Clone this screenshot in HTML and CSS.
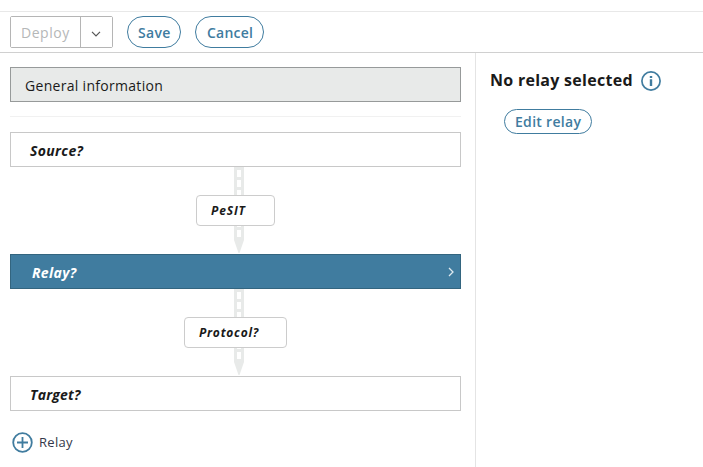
FILE: index.html
```html
<!DOCTYPE html>
<html lang="en">
<head>
<meta charset="utf-8">
<title>Flow editor</title>
<link rel="stylesheet" href="styles.css">
</head>
<body>
<header class="toolbar">
  <div class="split">
    <button class="split-main" disabled><span>Deploy</span></button>
    <button class="split-toggle" aria-label="More">
      <svg width="10" height="6" viewBox="0 0 10 6"><path d="M1 .8 5 4.8 9 .8" fill="none" stroke="#555" stroke-width="1.2"/></svg>
    </button>
  </div>
  <button class="pill save"><span>Save</span></button>
  <button class="pill cancel"><span>Cancel</span></button>
</header>
<main class="content">
  <section class="flow">
    <div class="bar general"><span>General information</span></div>
    <hr class="divider">
    <div class="bar step"><span>Source?</span></div>
    <div class="link">
      <svg class="arrow" width="10" height="87" viewBox="0 0 10 87" fill="#e8eae9" fill-rule="evenodd"><path d="M0 0H10V73L5.5 86H4.5L0 73ZM3 3V10H7V3ZM3 13V20H7V13ZM3 23V30H7V23ZM3 53V60H7V53ZM3 63V70H7V63Z"/></svg>
      <div class="node pesit"><span>PeSIT</span></div>
    </div>
    <div class="bar step active"><span>Relay?</span>
      <svg width="6" height="10" viewBox="0 0 6 10"><path d="M1 1 5 5 1 9" fill="none" stroke="#dfeaf0" stroke-width="1.3"/></svg>
    </div>
    <div class="link">
      <svg class="arrow" width="10" height="87" viewBox="0 0 10 87" fill="#e8eae9" fill-rule="evenodd"><path d="M0 0H10V73L5.5 86H4.5L0 73ZM3 3V10H7V3ZM3 13V20H7V13ZM3 23V30H7V23ZM3 53V60H7V53ZM3 63V70H7V63Z"/></svg>
      <div class="node protocol"><span>Protocol?</span></div>
    </div>
    <div class="bar step target"><span>Target?</span></div>
    <div class="add">
      <svg width="21" height="21" viewBox="0 0 21 21" fill="none" stroke="#407c9f"><circle cx="10.5" cy="10.5" r="9.3" stroke-width="1.8"/><path d="M10.5 5V16M5 10.5H16" stroke-width="1.8"/></svg>
      <span>Relay</span>
    </div>
  </section>
  <aside class="details">
    <div class="heading">
      <h1>No relay selected</h1>
      <svg width="20" height="20" viewBox="0 0 20 20" fill="none" stroke="#407c9f"><circle cx="10" cy="10" r="9.1" stroke-width="1.7"/><path d="M10 8.3V15M10 5V7" stroke-width="2.4"/></svg>
    </div>
    <button class="pill edit"><span>Edit relay</span></button>
  </aside>
</main>
</body>
</html>
```
FILE: styles.css
```css
* { box-sizing: border-box; }
body {
  margin: 0;
  height: 467px;
  overflow: hidden;
  display: flex;
  flex-direction: column;
  padding-top: 11px;
  background: #fff;
  color: #1a1a1a;
  font-family: "Open Sans", "Noto Sans", sans-serif;
  font-size: 14px;
  letter-spacing: .5px;
}
button {
  font: inherit;
  letter-spacing: inherit;
  background: #fff;
  padding: 0;
  margin: 0;
}
span { white-space: nowrap; }
.toolbar {
  flex: none;
  height: 42px;
  display: flex;
  align-items: flex-start;
  padding: 4px 10px 0;
  border-top: 1px solid #e8e8e8;
  border-bottom: 1px solid #d0d0d0;
}
.split {
  display: flex;
  width: 103px;
  height: 32px;
  border: 1px solid #b5b5b5;
  border-radius: 2px;
}
.split-main {
  width: 69px;
  border: 0;
  color: #b5b7b8;
  text-align: left;
  padding-left: 10px;
  letter-spacing: .55px;
}
.split-toggle {
  flex: 1;
  display: flex;
  align-items: center;
  justify-content: center;
  border: 0;
  border-left: 1px solid #b5b5b5;
  padding: 3px 1px 0 0;
}
.pill {
  display: flex;
  align-items: center;
  height: 32px;
  border: 1px solid #407c9f;
  border-radius: 16px;
  color: #407c9f;
  font-weight: 600;
  letter-spacing: .3px;
}
.save { width: 54px; margin-left: 14px; padding-left: 10px; }
.cancel { width: 69px; margin-left: 14px; padding-left: 11px; letter-spacing: .2px; }
.content { flex: 1; display: flex; }
.flow { width: 475px; padding: 14px 14px 0 10px; }
.bar {
  display: flex;
  align-items: center;
  justify-content: space-between;
  height: 35px;
  border: 1px solid #c8c8c8;
  padding: 1px 6px 0 19px;
}
.general {
  background: #e8eae9;
  border-color: #979a9a;
  padding: 2px 0 0 14px;
  letter-spacing: .3px;
}
.divider { border: 0; height: 1px; background: #f1f1f1; margin: 14px 0 15px; }
.step { font-weight: 700; font-style: italic; letter-spacing: .35px; }
.target { letter-spacing: .2px; }
.active {
  background: #407c9f;
  border-color: #33657f;
  color: #fff;
  padding-left: 21px;
}
.link { display: grid; height: 87px; place-items: center; }
.link > * { grid-area: 1 / 1; }
.arrow { margin-left: 7px; }
.node {
  display: flex;
  align-items: center;
  height: 31px;
  background: #fff;
  border: 1px solid #ccc;
  border-radius: 4px;
  padding-left: 14px;
  font-size: 12px;
  font-weight: 700;
  font-style: italic;
  letter-spacing: .75px;
}
.pesit { width: 79px; letter-spacing: .85px; }
.protocol { width: 103px; }
.add {
  display: flex;
  align-items: center;
  gap: 6px;
  padding: 21px 0 0 2px;
  height: 42px;
  font-size: 13px;
  letter-spacing: .3px;
  color: #33384a;
}
.add span { padding-bottom: 1px; }
.details { flex: 1; border-left: 1px solid #e4e4e4; padding: 18px 0 0 14px; }
.heading { display: flex; align-items: center; gap: 8px; height: 20px; }
h1 {
  margin: 0;
  padding-bottom: 2px;
  font-size: 16px;
  line-height: 20px;
  font-weight: 700;
  letter-spacing: .28px;
  white-space: nowrap;
}
.edit { width: 88px; height: 25px; margin: 18px 0 0 14px; padding-left: 10px; }
```
